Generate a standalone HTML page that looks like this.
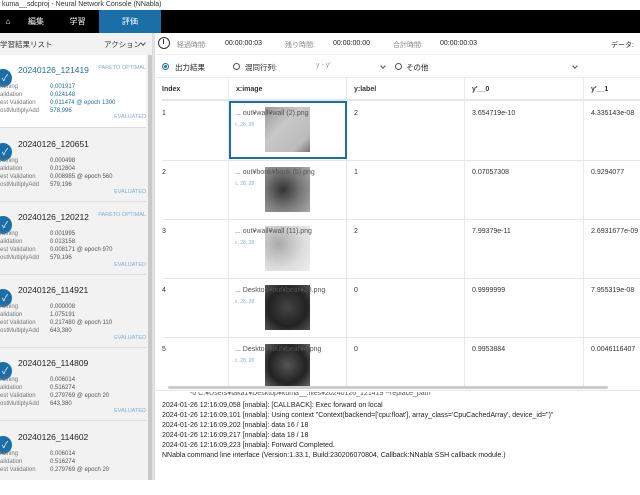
<!DOCTYPE html>
<html><head><meta charset="utf-8"><style>
*{box-sizing:border-box;margin:0;padding:0}
body{width:640px;height:480px;overflow:hidden;background:#fff;font-family:"Liberation Sans","Noto Sans CJK JP",sans-serif;position:relative;color:#222}
.a{position:absolute;white-space:nowrap}
.tb{left:0;top:0;width:640px;height:10px;background:#fff;font-size:7px;color:#333;line-height:10px}
.nav{left:0;top:10px;width:640px;height:23px;background:#000}
.tab{position:absolute;top:0;height:23px;line-height:23px;color:#fff;font-size:8px;text-align:center}
.lp{left:0;top:33px;width:152px;height:447px;background:#f2f2f2}
.item{position:absolute;left:0;width:146px;height:73px;border-bottom:1px solid #ddd}
.circ{position:absolute;left:-6px;top:14px;width:18px;height:18px;border-radius:50%;background:#1a6fa8;color:#fff;font-size:9px;line-height:18px;text-align:right;padding-right:4px}
.ttl{position:absolute;left:18px;top:10px;font-size:8.5px;color:#222}
.po{position:absolute;right:0;top:10px;font-size:5.5px;color:#7fb0d5}
.st{position:absolute;left:0;font-size:6px;color:#777}
.sv{position:absolute;left:50px;font-size:6px;color:#555}
.ev{position:absolute;right:0;top:60px;font-size:5.5px;color:#7fb0d5}
.hl{position:absolute;left:162px;height:1px;background:#e6e6e6;width:478px}
.vl{position:absolute;width:1px;background:#e8e8e8;top:78px;height:308px}
.c{position:absolute;font-size:7px;color:#333}
.img{position:absolute;width:45px;height:45px}
.fn{position:absolute;font-size:7px;color:#555}
.sz{position:absolute;font-size:5px;color:#7fb0d5}
.log{position:absolute;left:162px;font-size:7px;color:#222}
.chev{position:absolute;width:4px;height:4px;border-right:1px solid #555;border-bottom:1px solid #555;transform:rotate(45deg)}
</style></head><body>
<div class="a tb">&nbsp;kuma__sdcproj - Neural Network Console (NNabla)</div>
<div class="a nav">
 <div class="tab" style="left:0;width:16px">⌂</div>
 <div class="tab" style="left:16px;width:40px">編集</div>
 <div class="tab" style="left:56px;width:43px">学習</div>
 <div class="tab" style="left:99px;width:62px;background:#1a6fa8">評価</div>
</div>
<div class="a lp">
 <div class="a" style="left:0;top:6px;font-size:7.5px;color:#333">学習結果リスト</div>
 <div class="a" style="left:104px;top:6px;font-size:7.5px;color:#333">アクション</div>
 <div class="chev" style="left:141px;top:8px"></div>
 <div class="a" style="left:148px;top:22px;width:4px;height:425px;background:#c8c8c8"></div>
 <div class="item" style="top:22px;background:#fff">
  <div class="circ">✓</div><div class="ttl" style="color:#1a6fa8">20240126_121419</div><div class="po">PARETO OPTIMAL</div>
  <div class="st" style="top:29px">raining</div><div class="sv" style="top:29px;color:#1a6fa8">0.001917</div>
  <div class="st" style="top:37px">alidation</div><div class="sv" style="top:37px;color:#1a6fa8">0.024148</div>
  <div class="st" style="top:45px">est Validation</div><div class="sv" style="top:45px;color:#1a6fa8">0.011474 @ epoch 1300</div>
  <div class="st" style="top:53px">ostMultiplyAdd</div><div class="sv" style="top:53px;color:#1a6fa8">578,996</div>
  <div class="ev" style="top:59px">EVALUATED</div></div>
 <div class="item" style="top:96px">
  <div class="circ">✓</div><div class="ttl">20240126_120651</div>
  <div class="st" style="top:29px">raining</div><div class="sv" style="top:29px">0.000498</div>
  <div class="st" style="top:37px">alidation</div><div class="sv" style="top:37px">0.012804</div>
  <div class="st" style="top:45px">est Validation</div><div class="sv" style="top:45px">0.008985 @ epoch 560</div>
  <div class="st" style="top:53px">ostMultiplyAdd</div><div class="sv" style="top:53px">579,196</div>
  <div class="ev">EVALUATED</div></div>
 <div class="item" style="top:169px">
  <div class="circ">✓</div><div class="ttl">20240126_120212</div><div class="po">PARETO OPTIMAL</div>
  <div class="st" style="top:29px">raining</div><div class="sv" style="top:29px">0.001995</div>
  <div class="st" style="top:37px">alidation</div><div class="sv" style="top:37px">0.013158</div>
  <div class="st" style="top:45px">est Validation</div><div class="sv" style="top:45px">0.008171 @ epoch 970</div>
  <div class="st" style="top:53px">ostMultiplyAdd</div><div class="sv" style="top:53px">579,196</div>
  <div class="ev">EVALUATED</div></div>
 <div class="item" style="top:242px">
  <div class="circ">✓</div><div class="ttl">20240126_114921</div>
  <div class="st" style="top:29px">raining</div><div class="sv" style="top:29px">0.000008</div>
  <div class="st" style="top:37px">alidation</div><div class="sv" style="top:37px">1.075191</div>
  <div class="st" style="top:45px">est Validation</div><div class="sv" style="top:45px">0.217480 @ epoch 110</div>
  <div class="st" style="top:53px">ostMultiplyAdd</div><div class="sv" style="top:53px">643,380</div>
  <div class="ev">EVALUATED</div></div>
 <div class="item" style="top:315px">
  <div class="circ">✓</div><div class="ttl">20240126_114809</div>
  <div class="st" style="top:29px">raining</div><div class="sv" style="top:29px">0.006014</div>
  <div class="st" style="top:37px">alidation</div><div class="sv" style="top:37px">0.516274</div>
  <div class="st" style="top:45px">est Validation</div><div class="sv" style="top:45px">0.279769 @ epoch 20</div>
  <div class="st" style="top:53px">ostMultiplyAdd</div><div class="sv" style="top:53px">643,380</div>
  <div class="ev">EVALUATED</div></div>
 <div class="item" style="top:389px;border:none">
  <div class="circ">✓</div><div class="ttl">20240126_114602</div>
  <div class="st" style="top:29px">raining</div><div class="sv" style="top:29px">0.006014</div>
  <div class="st" style="top:37px">alidation</div><div class="sv" style="top:37px">0.516274</div>
  <div class="st" style="top:45px">est Validation</div><div class="sv" style="top:45px">0.279769 @ epoch 20</div></div>
</div>
<div class="a" style="left:152px;top:33px;width:3px;height:447px;background:#e0e0e0"></div>
<div class="a" style="left:155px;top:33px;width:485px;height:22px;border-bottom:1px solid #eee"></div>
<div class="a" style="left:158px;top:37px;width:12px;height:12px;border:1.3px solid #333;border-radius:50%"></div>
<div class="a" style="left:163px;top:39px;width:1.3px;height:5px;background:#333"></div>
<div class="a" style="left:177px;top:40px;font-size:7px;color:#888">経過時間:</div>
<div class="a" style="left:225px;top:40px;font-size:7px">00:00:00:03</div>
<div class="a" style="left:285px;top:40px;font-size:7px;color:#888">残り時間:</div>
<div class="a" style="left:333px;top:40px;font-size:7px">00:00:00:00</div>
<div class="a" style="left:393px;top:40px;font-size:7px;color:#888">合計時間:</div>
<div class="a" style="left:440px;top:40px;font-size:7px">00:00:00:03</div>
<div class="a" style="left:611px;top:40px;font-size:7px">データ:</div>
<div class="a" style="left:155px;top:55px;width:485px;height:23px;border-bottom:1px solid #eee"></div>
<div class="a" style="left:162px;top:63px;width:7px;height:7px;border:1.2px solid #1a6fa8;border-radius:50%;padding:1px"><div style="width:100%;height:100%;border-radius:50%;background:#1a6fa8"></div></div>
<div class="a" style="left:175px;top:62px;font-size:7.5px">出力結果</div>
<div class="a" style="left:233px;top:63px;width:7px;height:7px;border:1px solid #555;border-radius:50%"></div>
<div class="a" style="left:245px;top:62px;font-size:7.5px">混同行列:</div>
<div class="a" style="left:316px;top:62px;font-size:7px;color:#999">y - y'</div>
<div class="chev" style="left:381px;top:64px"></div>
<div class="a" style="left:395px;top:63px;width:7px;height:7px;border:1px solid #555;border-radius:50%"></div>
<div class="a" style="left:406px;top:62px;font-size:7.5px">その他</div>
<div class="chev" style="left:573px;top:64px"></div>
<div class="c" style="left:162px;top:86px;font-weight:bold">Index</div>
<div class="c" style="left:236px;top:86px;font-weight:bold">x:image</div>
<div class="c" style="left:354px;top:86px;font-weight:bold">y:label</div>
<div class="c" style="left:472px;top:86px;font-weight:bold">y'__0</div>
<div class="c" style="left:591px;top:86px;font-weight:bold">y'__1</div>
<div class="hl" style="top:99px;height:2px"></div>
<div class="vl" style="left:228px"></div><div class="vl" style="left:346px"></div><div class="vl" style="left:464px"></div><div class="vl" style="left:583px"></div>
<div class="hl" style="top:160px"></div><div class="hl" style="top:219px"></div><div class="hl" style="top:278px"></div><div class="hl" style="top:337px"></div>
<div class="img" style="left:265px;top:107px;background:linear-gradient(135deg,#999,#c8c8c8 40%,#bbb 80%,#777)"></div>
<div class="img" style="left:265px;top:167px;background:radial-gradient(circle at 40% 50%,#333,#777 50%,#aaa)"></div>
<div class="img" style="left:265px;top:226px;background:radial-gradient(circle at 30% 40%,#aaa,#ddd 60%,#eee)"></div>
<div class="img" style="left:265px;top:285px;background:radial-gradient(circle at 50% 50%,#444,#222 60%,#555)"></div>
<div class="img" style="left:265px;top:344px;height:42px;background:radial-gradient(circle at 50% 50%,#555,#222 60%,#666)"></div>
<div class="a" style="left:229px;top:101px;width:118px;height:58px;border:2px solid #1a6fa8"></div>
<div class="c" style="left:162px;top:110px">1</div><div class="fn" style="left:235px;top:110px">... out¥wall¥wall (2).png</div><div class="sz" style="left:235px;top:122px">c, 28, 28</div>
<div class="c" style="left:354px;top:110px">2</div><div class="c" style="left:472px;top:110px">3.654719e-10</div><div class="c" style="left:591px;top:110px">4.335143e-08</div>
<div class="c" style="left:162px;top:169px">2</div><div class="fn" style="left:235px;top:169px">... out¥bonk¥bonk (5).png</div><div class="sz" style="left:235px;top:181px">c, 28, 28</div>
<div class="c" style="left:354px;top:169px">1</div><div class="c" style="left:472px;top:169px">0.07057308</div><div class="c" style="left:591px;top:169px">0.9294077</div>
<div class="c" style="left:162px;top:228px">3</div><div class="fn" style="left:235px;top:228px">... out¥wall¥wall (11).png</div><div class="sz" style="left:235px;top:240px">c, 28, 28</div>
<div class="c" style="left:354px;top:228px">2</div><div class="c" style="left:472px;top:228px">7.99379e-11</div><div class="c" style="left:591px;top:228px">2.6931677e-09</div>
<div class="c" style="left:162px;top:287px">4</div><div class="fn" style="left:235px;top:287px">... Desktop¥out¥bear¥28.png</div><div class="sz" style="left:235px;top:299px">c, 28, 28</div>
<div class="c" style="left:354px;top:287px">0</div><div class="c" style="left:472px;top:287px">0.9999999</div><div class="c" style="left:591px;top:287px">7.955319e-08</div>
<div class="c" style="left:162px;top:346px">5</div><div class="fn" style="left:235px;top:346px">... Desktop¥out¥bear¥4.png</div><div class="sz" style="left:235px;top:358px">c, 28, 28</div>
<div class="c" style="left:354px;top:346px">0</div><div class="c" style="left:472px;top:346px">0.9953884</div><div class="c" style="left:591px;top:346px">0.0046116407</div>
<div class="a" style="left:155px;top:386px;width:485px;height:3px;background:#fff"></div>
<div class="a" style="left:168px;top:386px;width:440px;height:3px;background:#ccc;border-radius:2px"></div>
<div class="a" style="left:155px;top:390px;width:485px;height:1px;background:#e6e6e6"></div>
<div class="log" style="left:190px;top:392px;height:6px;overflow:hidden;line-height:4px;color:#555">-o C:¥Users¥taka1¥Desktop¥kuma__.files¥20240126_121419 --replace_path</div>
<div class="log" style="top:402px">2024-01-26 12:16:09,058 [nnabla]: [CALLBACK]: Exec forward on local</div>
<div class="log" style="top:412px">2024-01-26 12:16:09,101 [nnabla]: Using context "Context(backend=['cpu:float'], array_class='CpuCachedArray', device_id='')"</div>
<div class="log" style="top:422px">2024-01-26 12:16:09,202 [nnabla]: data 16 / 18</div>
<div class="log" style="top:432px">2024-01-26 12:16:09,217 [nnabla]: data 18 / 18</div>
<div class="log" style="top:442px">2024-01-26 12:16:09,223 [nnabla]: Forward Completed.</div>
<div class="log" style="top:452px">NNabla command line interface (Version:1.33.1, Build:230206070804, Callback:NNabla SSH callback module.)</div>
</body></html>
